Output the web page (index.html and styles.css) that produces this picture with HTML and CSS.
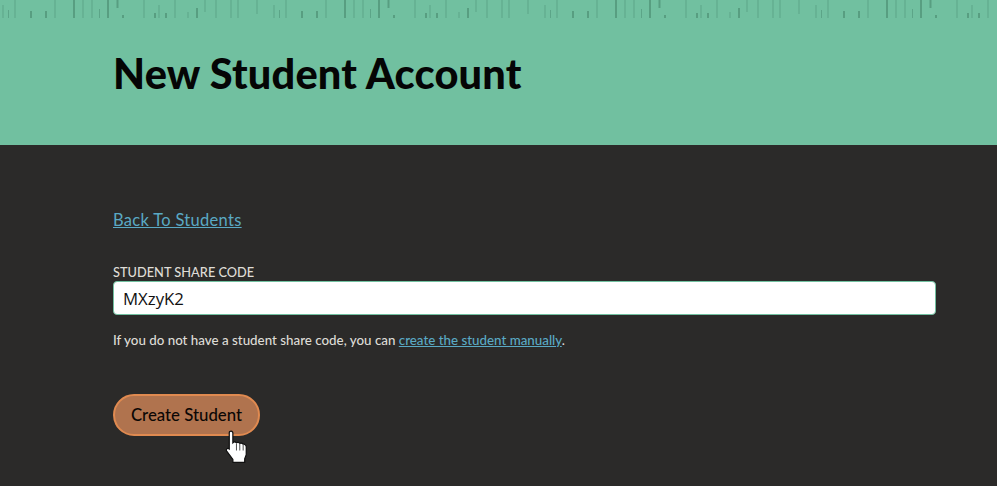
FILE: index.html
```html
<!DOCTYPE html>
<html lang="en">
<head>
<meta charset="utf-8">
<title>New Student Account</title>
<link rel="stylesheet" href="styles.css">
</head>
<body>
<header class="hero">
  <svg class="strip" width="100%" height="19" aria-hidden="true">
    <defs>
      <pattern id="grass" width="271" height="19" patternUnits="userSpaceOnUse">
        <g class="grass-thin">
          <path d="M3 5V18M8.500 10V18M15 0V18M55 0V18M83 0V18M92 0V18M99.500 9V18M144 0V18M159 5V18M175 0V18M188 12V18M205 0V12M216 0V18M231 0V18M238 0V18M257 0V14"/>
        </g>
        <g class="grass-thick">
          <path d="M31 11V18M46 11V18M74 0V18M108 0V18M117.500 0V8M123 15V18M155 13V18M166 13V18M197 8V18"/>
        </g>
      </pattern>
    </defs>
    <rect width="100%" height="19" fill="url(#grass)"/>
  </svg>
  <h1 class="title">New Student Account</h1>
</header>
<main class="content">
  <a class="back" href="#">Back To Students</a>
  <form class="form">
    <label class="label" for="code">STUDENT SHARE CODE</label>
    <input class="input" id="code" type="text" value="MXzyK2">
    <p class="help">If you do not have a student share code, you can <a href="#">create the student manually</a>.</p>
    <button class="button" type="button">Create Student</button>
  </form>
</main>
<svg class="cursor" width="27" height="35" viewBox="0 0 26 34" aria-hidden="true">
  <path d="M5.500 1.500C7 .5 8.500 1.500 8.500 3V12.500C9.500 11.500 11 11.500 12 12.500C13 11.800 14.500 12 15.200 13C16.300 12.500 17.800 12.800 18.500 13.800C19.800 13.400 21.500 14.500 21.500 16.500V24L20 28V31.500H8.500V28.500L2.500 20.500C1.500 19 3 17 5 18.500V3C5 2.300 5 2 5.500 1.500Z"/>
  <path class="cursor-lines" d="M12 13V20M15.200 13V20M18.500 14V20"/>
</svg>
</body>
</html>
```
FILE: styles.css
```css
html, body {
  margin: 0;
  padding: 0;
}

body {
  position: relative;
  min-height: 486px;
  background: #2b2a29;
  color: #dedcd6;
  font-family: "Lato", "Liberation Sans", sans-serif;
  overflow: hidden;
}

.hero {
  height: 145px;
  background: #71c0a0;
  box-sizing: border-box;
}

.strip {
  display: block;
}

.grass-thin path {
  fill: none;
  stroke: #5ca588;
  stroke-width: 1;
}

.grass-thick path {
  fill: none;
  stroke: #589e81;
  stroke-width: 2;
}

.title {
  margin: 29px 0 0 113px;
  color: #050505;
  font-size: 41.500px;
  line-height: 50px;
  font-weight: 900;
  letter-spacing: 0.2px;
}

.content {
  padding: 65px 61px 0 113px;
}

.back {
  display: block;
  color: #5aa9c4;
  font-size: 16.500px;
  line-height: 20px;
  letter-spacing: 0.3px;
}

.form {
  margin-top: 35px;
}

.label {
  display: block;
  font-size: 12.800px;
  line-height: 15px;
  height: 16px;
  font-weight: 500;
}

.input {
  display: block;
  box-sizing: border-box;
  width: 100%;
  height: 34px;
  padding: 0 9px;
  border: 1px solid #71c0a0;
  border-radius: 4px;
  background: #fff;
  color: #111;
  font-family: "Open Sans", sans-serif;
  font-size: 16.800px;
}

.help {
  margin: 17px 0 0;
  font-size: 13.350px;
  line-height: 16px;
  font-weight: 500;
}

.help a {
  color: #5aa9c4;
}

.button {
  display: block;
  box-sizing: border-box;
  width: 147px;
  height: 42px;
  margin-top: 46px;
  padding: 0 0 1px;
  border: 2px solid #e08a50;
  border-radius: 21px;
  background: #b0734e;
  color: #0b0705;
  font-family: "Lato", sans-serif;
  font-size: 16.800px;
  font-weight: 500;
}

.cursor {
  position: absolute;
  left: 224px;
  top: 430px;
  fill: #fff;
  stroke: #111;
  stroke-width: 1.200;
}

.cursor-lines {
  fill: none;
  stroke: #555;
  stroke-width: 1;
}
```
